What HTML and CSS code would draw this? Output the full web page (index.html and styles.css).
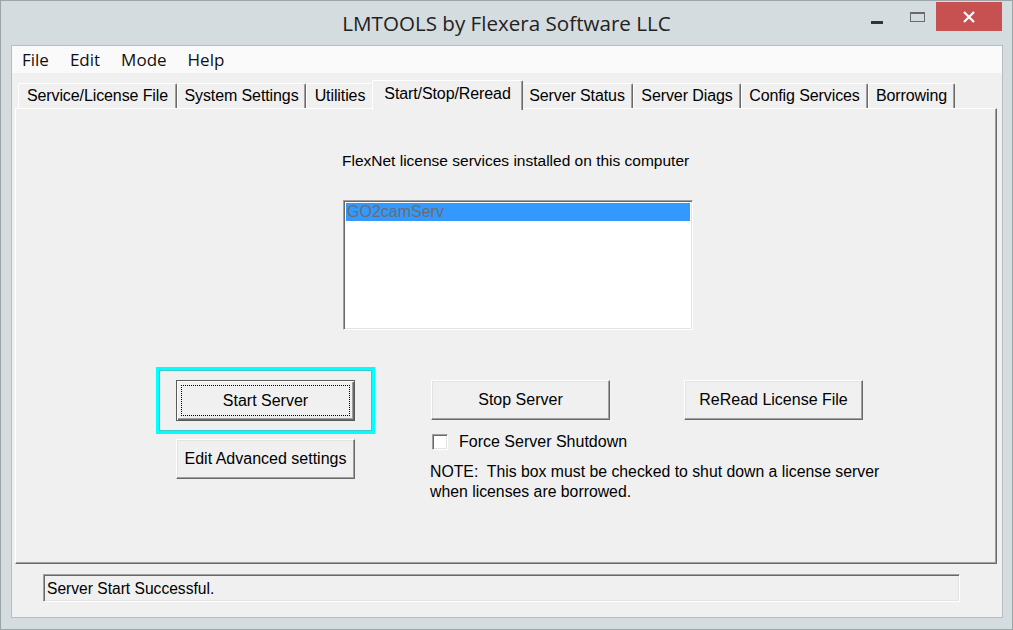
FILE: index.html
```html
<!DOCTYPE html>
<html lang="en">
<head>
    <meta charset="UTF-8">
    <meta name="viewport" content="width=device-width, initial-scale=1.0">
    <title>LMTOOLS by Flexera Software LLC</title>
    <link rel="stylesheet" href="styles.css">
</head>
<body>

<div class="window">
    <div class="titlebar">
        <div></div>
        <div class="title">LMTOOLS by Flexera Software LLC</div>
        <div class="caption-buttons">
            <span class="cap-min"></span>
            <span class="cap-max"></span>
            <span class="cap-close">
                <svg width="12" height="12" viewBox="0 0 12 12">
                    <path d="M1 1 L11 11 M11 1 L1 11" stroke="#fff" stroke-width="2.2" fill="none"/>
                </svg>
            </span>
        </div>
    </div>

    <div class="client">
        <div class="menubar">
            <span class="menu-item">File</span>
            <span class="menu-item">Edit</span>
            <span class="menu-item">Mode</span>
            <span class="menu-item">Help</span>
        </div>

        <div class="tabs">
            <div class="tab t1">Service/License File</div>
            <div class="tab t2">System Settings</div>
            <div class="tab t3">Utilities</div>
            <div class="tab t4 selected">Start/Stop/Reread</div>
            <div class="tab t5">Server Status</div>
            <div class="tab t6">Server Diags</div>
            <div class="tab t7">Config Services</div>
            <div class="tab t8">Borrowing</div>
        </div>

        <div class="panel">
            <p class="services-label">FlexNet license services installed on this computer</p>
            <div class="listbox">
                <div class="list-item selected">GO2camServ</div>
            </div>

            <div class="controls">
                <div class="col col-start">
                    <div class="focus-ring">
                        <button class="btn default"><span class="focus-dots">Start Server</span></button>
                    </div>
                    <button class="btn edit-btn">Edit Advanced settings</button>
                </div>
                <div class="col col-stop">
                    <button class="btn stop-btn">Stop Server</button>
                    <label class="check-row">
                        <span class="checkbox"></span>
                        <span>Force Server Shutdown</span>
                    </label>
                    <p class="note">NOTE:&nbsp; This box must be checked to shut down a license server<br>when licenses are borrowed.</p>
                </div>
                <div class="col col-reread">
                    <button class="btn">ReRead License File</button>
                </div>
            </div>
        </div>

        <div class="statusbar">
            <div class="status-field">Server Start Successful.</div>
        </div>
    </div>
</div>

</body>
</html>
```

FILE: styles.css
```css
* {
    box-sizing: border-box;
}
body {
    margin: 0;
    font-family: "Liberation Sans", Arial, sans-serif;
    font-size: 16px;
    color: #000;
    background: #d4dcdf;
}
.window {
    width: 1013px;
    height: 630px;
    border: 1px solid #9ba4a7;
    background: #d4dcdf;
    padding: 0 9px 11px 10px;
    display: flex;
    flex-direction: column;
}

/* title bar */
.titlebar {
    height: 44px;
    display: grid;
    grid-template-columns: 1fr auto 1fr;
    margin: 0 -9px 0 -10px;
}
.title {
    font-family: "Open Sans", "Noto Sans", sans-serif;
    font-size: 20.6px;
    color: #222;
    line-height: 44px;
}
.caption-buttons {
    display: flex;
    justify-content: flex-end;
    align-items: flex-start;
    padding-right: 10px;
}
.cap-min {
    width: 12px;
    height: 3px;
    background: #333;
    margin-top: 20px;
}
.cap-max {
    width: 15px;
    height: 10px;
    border: 1px solid #6a6a6a;
    border-top-width: 2px;
    margin: 11px 0 0 27px;
}
.cap-close {
    width: 66px;
    height: 29px;
    margin: 1px 0 0 11px;
    background: #c75050;
    display: flex;
    align-items: center;
    justify-content: center;
}

/* client area */
.client {
    height: 573px;
    background: #f0f0f0;
    border: 1px solid #b6bec1;
    display: flex;
    flex-direction: column;
}
.menubar {
    height: 27px;
    background: #fafafa;
    display: flex;
    align-items: center;
    font-family: "Open Sans", "Noto Sans", sans-serif;
    font-size: 17px;
    color: #111;
}
.menu-item {
    padding: 0 10px;
    margin-right: 1px;
}

/* tabs */
.tabs {
    display: flex;
    align-items: flex-end;
    margin-top: 7px;
    padding-left: 6px;
    height: 30px;
    position: relative;
    z-index: 2;
}
.tab {
    height: 25px;
    margin-bottom: 2px;
    border-top: 1px solid #fff;
    border-left: 1px solid #fff;
    border-right: 1px solid #696969;
    border-radius: 2px 2px 0 0;
    box-shadow: inset -1px 0 #a0a0a0;
    text-align: center;
    line-height: 24px;
    white-space: nowrap;
    background: #f0f0f0;
    letter-spacing: -0.1px;
}
.t1 { width: 159px; }
.t2 { width: 129px; }
.t3 { width: 68px; }
.t4 { width: 151px; }
.t5 { width: 112px; }
.t6 { width: 108px; }
.t7 { width: 127px; }
.t8 { width: 87px; }
.tab.selected {
    height: 30px;
    margin: 0 -2px;
    line-height: 26px;
    position: relative;
    z-index: 3;
}

.panel {
    margin: -2px 5px 0 3px;
    height: 456px;
    border-top: 1px solid #fff;
    border-left: 1px solid #fff;
    border-right: 1px solid #696969;
    border-bottom: 1px solid #696969;
    box-shadow: inset -1px -1px #a0a0a0;
    position: relative;
    z-index: 1;
}
.services-label {
    margin: 43px 0 0 326px;
    font-size: 15.5px;
    line-height: 18px;
}
.listbox {
    margin: 30px 0 0 327px;
    width: 350px;
    height: 130px;
    background: #fff;
    border-top: 1px solid #a0a0a0;
    border-left: 1px solid #a0a0a0;
    border-right: 1px solid #fff;
    border-bottom: 1px solid #fff;
    box-shadow: inset 1px 1px #696969, inset -1px -1px #e3e3e3;
    padding: 2px 2px 0 2px;
}
.list-item {
    height: 18px;
    line-height: 18px;
    padding-left: 1px;
    font-size: 16px;
}
.list-item.selected {
    background: #3399ff;
    color: #6d6d6d;
}

/* buttons area */
.controls {
    display: grid;
    grid-template-columns: 219px 199px 179px;
    column-gap: 55px;
    margin: 37px 0 0 140px;
}
.btn {
    display: block;
    width: 179px;
    height: 40px;
    padding: 0;
    font-family: "Liberation Sans", Arial, sans-serif;
    font-size: 16px;
    color: #000;
    background: #f0f0f0;
    border: 1px solid;
    border-color: #fff #696969 #696969 #fff;
    box-shadow: inset -1px -1px #a0a0a0, inset 1px 1px #e3e3e3;
}
.focus-ring {
    width: 219px;
    height: 67px;
    border: 3px solid #00ffff;
    box-shadow: inset 0 0 0 1px #40c8c8;
    padding: 10px 17px;
}
.btn.default {
    height: 41px;
    border: 1px solid #5a5a5a;
    box-shadow: inset 1px 1px #fff, inset -1px -1px #696969, inset -2px -2px #a0a0a0;
    padding: 4px;
}
.focus-dots {
    display: flex;
    align-items: center;
    justify-content: center;
    height: 100%;
    border: 1px dotted #000;
}
.edit-btn {
    margin: 5px 0 0 20px;
}
.stop-btn {
    margin: 13px 0 0 1px;
}
.col-reread .btn {
    margin-top: 13px;
}
.check-row {
    display: flex;
    align-items: center;
    margin: 13px 0 0 2px;
    gap: 11px;
    white-space: nowrap;
}
.checkbox {
    width: 16px;
    height: 16px;
    background: #fff;
    border: 1px solid;
    border-color: #a0a0a0 #fff #fff #a0a0a0;
    box-shadow: inset 1px 1px #696969, inset -1px -1px #e3e3e3;
}
.note {
    margin: 11px 0 0 0;
    font-size: 15.8px;
    line-height: 20px;
    white-space: nowrap;
}

/* status bar */
.statusbar {
    padding: 10px 0 0 31px;
}
.status-field {
    width: 917px;
    height: 28px;
    line-height: 27px;
    padding-left: 3px;
    font-size: 15.6px;
    border-top: 1px solid #a0a0a0;
    border-left: 1px solid #a0a0a0;
    border-right: 1px solid #fff;
    border-bottom: 1px solid #fff;
    box-shadow: inset 1px 1px #696969, inset -1px -1px #e3e3e3;
}
```
